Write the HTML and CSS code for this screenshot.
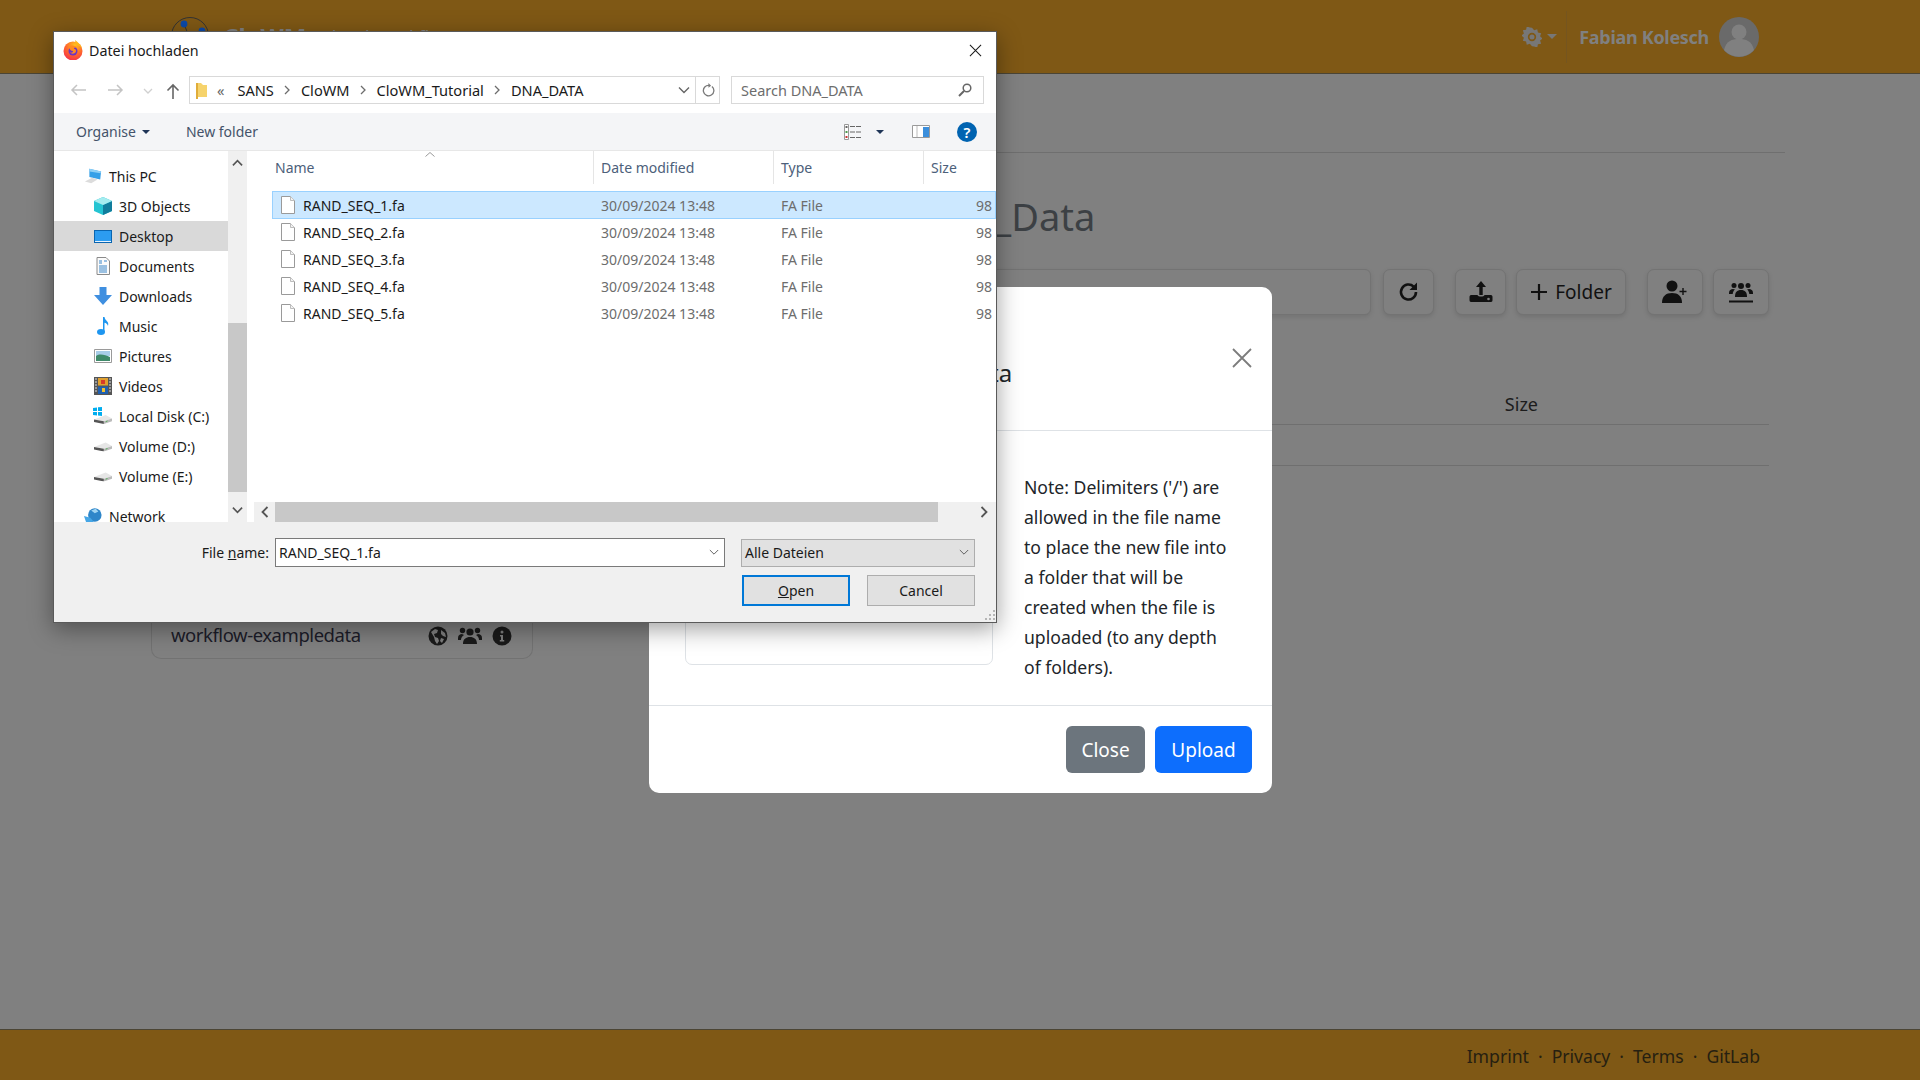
FILE: index.html
```html
<!DOCTYPE html>
<html lang="en">
<head>
  <meta charset="UTF-8" />
  <title>CloWM</title>
  <link rel="stylesheet" href="styles.css">
</head>
<body>
  <svg class="defs" aria-hidden="true">
    <symbol id="i-file" viewBox="0 0 16 20"><path d="M1.5 1.5h9l4 4v13h-13z" fill="#fff" stroke="#9a9a9a"/><path d="M10.5 1.5v4h4" fill="#f2f2f2" stroke="#bdbdbd"/></symbol>
    <symbol id="i-drive" viewBox="0 0 20 12"><path d="M0 7l13-5 7 4-9 3z" fill="#e6e6e6"/><path d="M0 7l11 2v3L0 10z" fill="#555"/><path d="M11 9l9-3v3l-9 3z" fill="#bbb"/><path d="M13 9.500l2-.7" stroke="#4caf50"/></symbol>
    <symbol id="i-chev" viewBox="0 0 10 10"><path d="M3 1l4 4-4 4" fill="none" stroke="#6d6d6d" stroke-width="1.300"/></symbol>
    <symbol id="i-down" viewBox="0 0 12 8"><path d="M1 1l5 5 5-5" fill="none" stroke="#555" stroke-width="1.100"/></symbol>
  </svg>

  <header class="topbar">
    <div class="brand">
      <svg class="logo" viewBox="0 0 38 38"><circle cx="19" cy="19" r="18.500" fill="none" stroke="#333"/><path d="M13 7l6 15 12-8M19 22l-9 10" stroke="#333" fill="none"/><circle cx="13" cy="7" r="3.400" fill="#0b49a8"/><circle cx="31" cy="14" r="3.400" fill="#0b49a8"/><circle cx="19" cy="22" r="3" fill="#8a2a1a"/></svg>
      <span class="brand-name">CloWM</span>
      <span class="brand-sub">Cloud Workflow Manager</span>
    </div>
    <div class="top-right">
      <div class="theme">
        <svg class="gear" viewBox="0 0 24 24"><path fill-rule="evenodd" fill="#777" d="M12 1l2.600 3 3.700-1.300.8 3.900 3.900.8-1.300 3.700 3 2.600-3 2.600 1.300 3.700-3.900.8-.8 3.900-3.700-1.300L12 23l-2.600-3-3.700 1.300-.8-3.900-3.900-.8 1.300-3.700-3-2.600 3-2.600-1.300-3.700 3.900-.8.8-3.900 3.700 1.300zM12 7a5 5 0 100 10 5 5 0 000-10zm0 2a3 3 0 110 6 3 3 0 010-6z"/></svg>
        <span class="caret"></span>
      </div>
      <span class="user-name">Fabian Kolesch</span>
      <svg class="avatar" viewBox="0 0 40 40"><circle cx="20" cy="20" r="20" fill="#6a6a6a"/><circle cx="20" cy="15" r="7.500" fill="#808080"/><path d="M5 33c2-9 8-11 15-11s13 2 15 11a20 20 0 01-30 0z" fill="#808080"/></svg>
    </div>
  </header>

  <main class="page">
    <div class="tabs"></div>
    <div class="columns">
      <aside class="buckets">
        <div class="bucket">
          <span class="bucket-name">workflow-exampledata</span>
          <span class="bucket-icons">
            <svg viewBox="0 0 20 20"><circle cx="10" cy="10" r="9.500" fill="#1a1a1a"/><path d="M3 6l4-3 3 1-1 3-3 1 1 3 3 1 1 3-2 3-2-3-1-4zM13 4l4 3 1 4-3-1-2-2zM13 12l3 1-2 4-2-2z" fill="#808080"/></svg>
            <svg viewBox="0 0 24 20"><circle cx="12" cy="6" r="3.600" fill="#1a1a1a"/><circle cx="4.500" cy="4.500" r="2.700" fill="#1a1a1a"/><circle cx="19.500" cy="4.500" r="2.700" fill="#1a1a1a"/><path d="M5 18c0-5 3-7 7-7s7 2 7 7zM0 12c0-3 2-4 4-4l2 1c-2 1-3 3-3 5H0zM24 12c0-3-2-4-4-4l-2 1c2 1 3 3 3 5h3z" fill="#1a1a1a"/></svg>
            <svg viewBox="0 0 20 20"><circle cx="10" cy="10" r="9.500" fill="#1a1a1a"/><circle cx="10" cy="6" r="1.500" fill="#808080"/><path d="M8 9h3v5h1.200v1.500H7.800V14H9v-3.500H8z" fill="#808080"/></svg>
          </span>
        </div>
      </aside>
      <section class="files">
        <h1 class="files-title">Bucket CloWM_Tutorial_Data</h1>
        <div class="file-tools">
          <div class="search-field"></div>
          <button class="tool tool-sq">
            <svg viewBox="0 0 24 24"><path d="M19 12a7.500 7.500 0 11-2.300-5.400" fill="none" stroke="#111" stroke-width="2.600"/><path d="M20 2.500v7.500h-7.500z" fill="#111"/></svg>
          </button>
          <button class="tool tool-sq tool-sep">
            <svg viewBox="0 0 24 24"><path d="M12 1l5 6h-3.300v8h-3.400V7H7z" fill="#111"/><path d="M2 15h6.500c.5 2 6.500 2 7 0H22c1 0 1.500 1 1.500 2v3c0 1-.5 2-1.500 2H2c-1 0-1.500-1-1.500-2v-3c0-1 .5-2 1.500-2z" fill="#111"/><circle cx="19.500" cy="19" r="1.300" fill="#808080"/></svg>
          </button>
          <button class="tool tool-folder">
            <svg viewBox="0 0 18 18"><path d="M9 1v16M1 9h16" stroke="#111" stroke-width="2.200" fill="none"/></svg>
            Folder
          </button>
          <button class="tool tool-user tool-sep">
            <svg viewBox="0 0 26 24"><circle cx="10" cy="6" r="5.500" fill="#111"/><path d="M0 23c0-7 4-10 10-10s10 3 10 10z" fill="#111"/><path d="M21 8v7M17.500 11.500h7" stroke="#111" stroke-width="1.400" fill="none"/></svg>
          </button>
          <button class="tool tool-user">
            <svg viewBox="0 0 26 24"><circle cx="13" cy="6" r="3" fill="#111"/><circle cx="6" cy="5.500" r="2.500" fill="#111"/><circle cx="20" cy="5.500" r="2.500" fill="#111"/><path d="M7 17c0-5 2-7 6-7s6 2 6 7zM1 13c0-3 2-4 4-4l2 .5c-1.500 1-2 2.500-2.300 4.500H1zM25 13c0-3-2-4-4-4l-2 .5c1.500 1 2 2.500 2.300 4.500H25z" fill="#111"/><path d="M1 21.500h24" stroke="#111" stroke-width="2" fill="none"/></svg>
          </button>
        </div>
        <div class="file-head"><span>Size</span></div>
        <div class="file-empty"></div>
      </section>
    </div>
  </main>

  <footer class="bottombar">
    <a>Imprint</a><span>·</span><a>Privacy</a><span>·</span><a>Terms</a><span>·</span><a>GitLab</a>
  </footer>

  <!-- upload modal, behind the native file dialog -->
  <div class="modal">
    <div class="modal-head">
      <h5 class="modal-title">Upload new file into DNA_Data</h5>
      <svg class="modal-x" viewBox="0 0 20 20"><path d="M1 1l18 18M19 1L1 19" stroke="#7c7c7c" stroke-width="1.800" fill="none"/></svg>
    </div>
    <div class="modal-body">
      <div class="drop-card"></div>
      <p class="note">Note: Delimiters ('/') are allowed in the file name to place the new file into a folder that will be created when the file is uploaded (to any depth of folders).</p>
    </div>
    <div class="modal-foot">
      <button class="btn btn-grey">Close</button>
      <button class="btn btn-blue">Upload</button>
    </div>
  </div>

  <!-- windows file dialog -->
  <div class="dlg">
    <div class="dlg-title">
      <svg class="fx" viewBox="0 0 20 20">
        <defs>
          <radialGradient id="fxa" cx=".6" cy=".2" r=".9"><stop offset="0" stop-color="#ffc31f"/><stop offset=".5" stop-color="#ff6a2b"/><stop offset="1" stop-color="#f3264f"/></radialGradient>
        </defs>
        <circle cx="10" cy="11" r="9.500" fill="url(#fxa)"/>
        <path d="M12 0c3 2 6 5 7 8-2-2-4-3-6-3z" fill="#ffb71b"/>
        <circle cx="10" cy="11" r="4.500" fill="#6b34c4"/>
        <path d="M6 7c2-2 6-2 8 1-2-1-3 0-3 1 2 0 3 2 1 4-2 1-4 1-5-1 1 1 3 1 3-1-2 0-4-2-4-4z" fill="#ff8a1f"/>
      </svg>
      <span class="dlg-name">Datei hochladen</span>
      <svg class="dlg-x" viewBox="0 0 14 14"><path d="M1 1l12 12M13 1L1 13" stroke="#1a1a1a" stroke-width="1.100" fill="none"/></svg>
    </div>

    <div class="dlg-addr">
      <svg class="nav-arrow" viewBox="0 0 16 14"><path d="M16 7H2M7 2L2 7l5 5" fill="none" stroke="#c4c4c4" stroke-width="1.500"/></svg>
      <svg class="nav-arrow" viewBox="0 0 16 14"><path d="M0 7h14M9 2l5 5-5 5" fill="none" stroke="#c4c4c4" stroke-width="1.500"/></svg>
      <svg class="nav-mini" viewBox="0 0 12 8"><path d="M2 2l4 4 4-4" fill="none" stroke="#d0d0d0" stroke-width="1.300"/></svg>
      <svg class="nav-up" viewBox="0 0 14 16"><path d="M7 16V2M1.500 7.500L7 2l5.500 5.500" fill="none" stroke="#666" stroke-width="1.600"/></svg>
      <div class="crumbs">
        <svg class="crumb-folder" viewBox="0 0 13 17"><path d="M1 1h5l2 2h4v12H3l-2 2z" fill="#f6d36c"/><path d="M1 1h2v16H1z" fill="#e0ad3a"/></svg>
        <span class="crumb-more">«</span>
        <span>SANS</span><svg class="chev" viewBox="0 0 10 10"><use href="#i-chev"/></svg>
        <span>CloWM</span><svg class="chev" viewBox="0 0 10 10"><use href="#i-chev"/></svg>
        <span>CloWM_Tutorial</span><svg class="chev" viewBox="0 0 10 10"><use href="#i-chev"/></svg>
        <span>DNA_DATA</span>
        <svg class="crumb-drop" viewBox="0 0 12 8"><path d="M1 1.500l5 5 5-5" fill="none" stroke="#666" stroke-width="1.400"/></svg>
        <span class="crumb-refresh">
          <svg viewBox="0 0 16 16"><path d="M12.500 4a6 6 0 11-3-1.300" fill="none" stroke="#7a7a7a" stroke-width="1.500"/><path d="M8.500 0v5.500l3-2.500z" fill="#7a7a7a"/></svg>
        </span>
      </div>
      <div class="dlg-search">
        <span>Search DNA_DATA</span>
        <svg viewBox="0 0 14 14"><circle cx="9" cy="5" r="3.800" fill="none" stroke="#666" stroke-width="1.500"/><path d="M6 8l-5 5" stroke="#666" stroke-width="2"/></svg>
      </div>
    </div>

    <div class="dlg-tools">
      <span class="tool-text">Organise</span><span class="mini-caret"></span>
      <span class="tool-text tool-new">New folder</span>
      <div class="tools-right">
        <svg class="view-ic" viewBox="0 0 18 16"><path d="M.5.500h4v15h-4z" fill="#fff" stroke="#999"/><path d="M1.500 2h2v2h-2z" fill="#666"/><path d="M1.500 7h2v2h-2z" fill="#4d9a4d"/><path d="M1.500 12h2v2h-2z" fill="#c33"/><path d="M6 2.500h12M6 8h12M6 13.500h12" stroke="#666" stroke-dasharray="5 1" fill="none"/></svg>
        <span class="mini-caret view-caret"></span>
        <svg class="pane-ic" viewBox="0 0 18 13"><path d="M.5.500h17v12H.5z" fill="#fff" stroke="#9a9a9a"/><path d="M11 2h6v10h-6z" fill="#3c8fdc"/><path d="M5 1v11" stroke="#bbb"/></svg>
        <span class="help-ic">?</span>
      </div>
    </div>

    <div class="dlg-body">
      <nav class="side">
        <ul class="side-list">
          <li class="side-top">
            <svg viewBox="0 0 20 18"><path d="M6 1l13 3-1 9-12-3z" fill="#35a0e8"/><path d="M6 1l13 3-.5 2L6 4z" fill="#8fd0f5"/><path d="M1 15l8-4 6 2-7 4z" fill="#dcdcdc"/></svg>This PC
          </li>
          <li>
            <svg viewBox="0 0 18 18"><path d="M9 0l9 4v10l-9 4-9-4V4z" fill="#24c4d2"/><path d="M9 8l9-4v10l-9 4z" fill="#117d9c"/><path d="M9 0l9 4-9 4-9-4z" fill="#a5ecef"/></svg>3D Objects
          </li>
          <li class="side-on">
            <svg viewBox="0 0 18 14"><path d="M0 1h18v13H0z" fill="#0a65b0"/><path d="M1 2h16v10H1z" fill="#2c9cf0"/><path d="M1 12h16v1H1z" fill="#e8f4ff"/></svg>Desktop
          </li>
          <li>
            <svg viewBox="0 0 18 18"><path d="M3 .5h9l3.500 3.500v13.500H3z" fill="#fbfbfb" stroke="#8a8a8a"/><path d="M5 4h3M5 6h3M10 4h3M5 9h8M5 11h8M5 13h8M5 15h8" stroke="#3b86c8"/></svg>Documents
          </li>
          <li>
            <svg viewBox="0 0 18 18"><path d="M5.500 0h7v8H18l-9 10L0 8h5.500z" fill="#3f8fe0"/></svg>Downloads
          </li>
          <li>
            <svg viewBox="0 0 18 18"><ellipse cx="7" cy="15" rx="4" ry="3" fill="#1e96f0"/><path d="M9 0h1.500c.5 4 5 4 3.500 9-.5-2-2-3-3.500-3.300V15H9z" fill="#1e96f0"/></svg>Music
          </li>
          <li>
            <svg viewBox="0 0 18 14"><path d="M.5.500h17v13H.5z" fill="#fff" stroke="#9a9a9a"/><path d="M2 2h14v5H2z" fill="#a8cde8"/><path d="M2 7c4-3 9-1 14 1v4H2z" fill="#3f8a6a"/></svg>Pictures
          </li>
          <li>
            <svg viewBox="0 0 18 18"><path d="M0 0h18v18H0z" fill="#555"/><path d="M4 1h10v7.500H4z" fill="#e0a030"/><path d="M4 9.500h10V17H4z" fill="#2060b0"/><path d="M7 3h4v4H7z" fill="#d83a2a"/><path d="M8 11h3v4H8z" fill="#f0c030"/><path d="M1 2h2M1 5h2M1 8h2M1 11h2M1 14h2M15 2h2M15 5h2M15 8h2M15 11h2M15 14h2" stroke="#ddd"/></svg>Videos
          </li>
          <li class="side-disk">
            <span class="disk-c">
              <svg class="win" viewBox="0 0 9 9"><path d="M0 1l4-.6V4H0zM5 .3L9 0v4H5zM0 5h4v3.600L0 8zM5 5h4v4l-4-.5z" fill="#00adef"/></svg>
              <svg class="drv" viewBox="0 0 20 12"><use href="#i-drive"/></svg>
            </span>Local Disk (C:)
          </li>
          <li>
            <svg viewBox="0 0 20 12"><use href="#i-drive"/></svg>Volume (D:)
          </li>
          <li>
            <svg viewBox="0 0 20 12"><use href="#i-drive"/></svg>Volume (E:)
          </li>
          <li class="side-top side-net">
            <svg viewBox="0 0 20 18"><circle cx="12" cy="8" r="7.500" fill="#2e86c9"/><path d="M8 3l5-2 3 3-4 2z" fill="#9fd4f2"/><path d="M0 9l7 2 6 7H3z" fill="#45a6e6"/></svg>Network
          </li>
        </ul>
        <div class="side-bar">
          <svg class="bar-ar" viewBox="0 0 12 8"><path d="M1 6.500l5-5 5 5" fill="none" stroke="#555" stroke-width="1.800"/></svg>
          <div class="bar-track"><div class="bar-thumb"></div></div>
          <svg class="bar-ar" viewBox="0 0 12 8"><path d="M1 1.500l5 5 5-5" fill="none" stroke="#555" stroke-width="1.800"/></svg>
        </div>
      </nav>

      <div class="list">
        <div class="list-head">
          <span class="col-name">Name<svg class="sort" viewBox="0 0 10 5"><path d="M.5 4.500L5 .5l4.500 4" fill="none" stroke="#999"/></svg></span>
          <span class="col-date">Date modified</span>
          <span class="col-type">Type</span>
          <span class="col-size">Size</span>
        </div>
        <div class="list-rows">
          <div class="row row-sel"><svg class="file-ic"><use href="#i-file"/></svg><span class="f-name">RAND_SEQ_1.fa</span><span class="f-date">30/09/2024 13:48</span><span class="f-type">FA File</span><span class="f-size">98</span></div>
          <div class="row"><svg class="file-ic"><use href="#i-file"/></svg><span class="f-name">RAND_SEQ_2.fa</span><span class="f-date">30/09/2024 13:48</span><span class="f-type">FA File</span><span class="f-size">98</span></div>
          <div class="row"><svg class="file-ic"><use href="#i-file"/></svg><span class="f-name">RAND_SEQ_3.fa</span><span class="f-date">30/09/2024 13:48</span><span class="f-type">FA File</span><span class="f-size">98</span></div>
          <div class="row"><svg class="file-ic"><use href="#i-file"/></svg><span class="f-name">RAND_SEQ_4.fa</span><span class="f-date">30/09/2024 13:48</span><span class="f-type">FA File</span><span class="f-size">98</span></div>
          <div class="row"><svg class="file-ic"><use href="#i-file"/></svg><span class="f-name">RAND_SEQ_5.fa</span><span class="f-date">30/09/2024 13:48</span><span class="f-type">FA File</span><span class="f-size">98</span></div>
        </div>
        <div class="hbar">
          <svg class="hbar-ar" viewBox="0 0 8 12"><path d="M6.500 1l-5 5 5 5" fill="none" stroke="#555" stroke-width="1.800"/></svg>
          <div class="hbar-thumb"></div>
          <svg class="hbar-ar hbar-end" viewBox="0 0 8 12"><path d="M1.500 1l5 5-5 5" fill="none" stroke="#555" stroke-width="1.800"/></svg>
        </div>
      </div>
    </div>

    <div class="dlg-foot">
      <div class="foot-row">
        <label class="foot-label">File <u>n</u>ame:</label>
        <div class="foot-input"><span>RAND_SEQ_1.fa</span><svg viewBox="0 0 12 8"><use href="#i-down"/></svg></div>
        <div class="foot-select"><span>Alle Dateien</span><svg viewBox="0 0 12 8"><use href="#i-down"/></svg></div>
      </div>
      <div class="foot-row foot-btns">
        <button class="win-btn win-default"><u>O</u>pen</button>
        <button class="win-btn">Cancel</button>
      </div>
      <svg class="grip" viewBox="0 0 12 12"><path d="M9 1h2v2H9zM5 5h2v2H5zM9 5h2v2H9zM1 9h2v2H1zM5 9h2v2H5zM9 9h2v2H9z" fill="#b5b5b5"/></svg>
    </div>
  </div>
</body>
</html>
```

FILE: styles.css
```css
*{box-sizing:border-box;}
html,body{height:100%;}
body{margin:0;background:#808080;font-family:"Noto Sans","Open Sans",sans-serif;color:#1c1c1c;overflow:hidden;display:flex;flex-direction:column;position:relative;}
ul{list-style:none;margin:0;padding:0;}
button{font-family:inherit;}
.defs{width:0;height:0;position:absolute;}

/* top bar */
.topbar{height:74px;flex:none;background:#7f5815;border-bottom:1px solid #4b4535;display:flex;align-items:center;justify-content:space-between;padding:0 161px 0 171px;}
.brand{display:flex;align-items:center;gap:14px;}
.logo{width:38px;height:38px;flex:none;margin-top:-1px;}
.brand-name{font-size:24px;font-weight:700;color:#808080;}
.brand-sub{font-size:18px;color:#808080;}
.top-right{display:flex;align-items:center;height:52px;}
.theme{display:flex;align-items:center;gap:5px;padding-right:9px;height:52px;border-right:1px solid #75551f;}
.gear{width:20px;height:20px;}
.caret{width:0;height:0;border:5px solid transparent;border-top-color:#777;border-bottom:0;}
.user-name{font-size:18px;font-weight:700;color:#808080;margin:0 10px 0 12px;letter-spacing:-.3px;}
.avatar{width:40px;height:40px;}

/* page behind the overlay */
.page{flex:1;min-height:0;padding:0 135px;}
.tabs{height:79px;border-bottom:1px solid #6f6f6f;}
.columns{display:flex;padding:0 16px;gap:40px;}
.buckets{width:382px;flex:none;}
.bucket{height:80px;margin-top:426px;border:1px solid #727272;border-top:0;border-radius:0 0 10px 10px;padding:0 20px 10px 19px;display:flex;justify-content:space-between;align-items:flex-end;}
.bucket-name{font-size:18.500px;color:#1c1c28;line-height:26px;white-space:nowrap;letter-spacing:-.45px;}
.bucket-icons{display:flex;gap:10px;align-items:center;height:20px;margin-bottom:2px;}
.bucket-icons svg{height:20px;width:20px;}
.bucket-icons svg:nth-child(2){width:24px;}
.files{flex:1;min-width:0;}
.files-title{margin:34px 0 0 10px;font-size:38px;font-weight:400;color:#3c4044;line-height:58px;white-space:nowrap;}
.file-tools{display:flex;align-items:stretch;height:46px;margin-top:24px;gap:10px;}
.search-field{flex:1;margin-right:2px;border:1px solid #737373;border-radius:6px;background:#808080;box-shadow:0 2px 5px rgba(0,0,0,.1);}
.tool{background:#808080;border:1px solid #737373;border-radius:7px;box-shadow:0 2px 5px rgba(0,0,0,.12);display:flex;align-items:center;justify-content:center;gap:7px;padding:0;color:#111;font-size:19px;}
.tool-sq{width:51px;}
.tool-sq svg{width:24px;height:24px;}
.tool-sep{margin-left:11px;}
.tool-folder{width:110px;}
.tool-folder svg{width:18px;height:18px;}
.tool-user{width:56px;}
.tool-user svg{width:26px;height:24px;}
.file-head{height:64px;margin-top:46px;border-bottom:1px solid #6f6f6f;display:flex;justify-content:flex-end;align-items:flex-end;padding:0 231px 8px 0;font-size:18px;color:#1c1c1c;}
.file-empty{height:41px;border-bottom:1px solid #6f6f6f;}

/* footer */
.bottombar{height:51px;flex:none;background:#7f5815;border-top:1px solid #4b4535;display:flex;justify-content:flex-end;align-items:center;gap:9px;padding:2px 160px 0 0;font-size:17.600px;color:#262011;}

/* upload modal */
.modal{position:absolute;left:649px;top:287px;width:623px;height:506px;background:#fff;border-radius:10px;display:flex;flex-direction:column;color:#212529;}
.modal-head{height:144px;flex:none;border-bottom:1px solid #dee2e6;display:flex;justify-content:space-between;padding:68px 20px 0;position:relative;}
.modal-title{margin:0 0 0 -3px;font-size:24px;font-weight:400;line-height:36px;white-space:nowrap;}
.modal-x{width:20px;height:20px;margin-top:-7px;}
.modal-body{flex:1;display:flex;gap:31px;padding:0 36px;min-height:0;}
.drop-card{width:308px;height:164px;margin-top:70px;border:1px solid #dee2e6;border-radius:7px;flex:none;}
.note{margin:41px 0 0;width:212px;font-size:17.600px;line-height:30px;flex:none;}
.modal-foot{height:88px;flex:none;border-top:1px solid #dee2e6;display:flex;justify-content:flex-end;gap:10px;padding:20px 20px 0;}
.btn{height:47px;border:0;border-radius:6px;color:#fff;font-size:19px;padding:0;}
.btn-grey{width:79px;background:#6c757d;}
.btn-blue{width:97px;background:#0d6efd;}

/* file dialog */
.dlg{position:absolute;left:53px;top:31px;width:944px;height:592px;background:#fff;border:1px solid #5a5a5a;box-shadow:0 6px 22px rgba(0,0,0,.38);display:flex;flex-direction:column;font-size:14px;color:#1a1a1a;}
.dlg-title{height:44px;flex:none;display:flex;align-items:center;padding:0 14px 8px 9px;}
.fx{width:20px;height:20px;margin-right:6px;}
.dlg-name{flex:1;font-size:14.300px;}
.dlg-x{width:13px;height:13px;}
.dlg-addr{height:37px;flex:none;display:flex;align-items:flex-start;padding-left:16px;}
.nav-arrow{width:16px;height:14px;margin:7px 22px 0 0;}
.nav-mini{width:12px;height:8px;margin:11px 12px 0 -4px;}
.nav-up{width:14px;height:16px;margin:7px 9px 0 0;}
.crumbs{width:531px;height:28px;border:1px solid #d9d9d9;display:flex;align-items:center;font-size:14.600px;padding-left:5px;}
.crumb-folder{width:13px;height:17px;margin-right:9px;}
.crumb-more{margin-right:13px;color:#666;}
.chev{width:10px;height:10px;margin:0 8.500px;}
.crumb-drop{width:12px;height:8px;margin-left:auto;margin-right:5px;}
.crumb-refresh{width:24px;height:26px;border-left:1px solid #d9d9d9;display:flex;align-items:center;justify-content:center;}
.crumb-refresh svg{width:14px;height:14px;}
.dlg-search{width:253px;height:28px;margin-left:11px;border:1px solid #d9d9d9;display:flex;align-items:center;justify-content:space-between;padding:0 11px 0 9px;color:#6d6d6d;font-size:14.500px;}
.dlg-search svg{width:14px;height:14px;}
.dlg-tools{height:38px;flex:none;background:#f4f5f7;border-bottom:1px solid #e7e7e7;display:flex;align-items:center;padding-left:22px;color:#44536a;font-size:14px;}
.mini-caret{width:0;height:0;border:4px solid transparent;border-top-color:#1f3557;border-bottom:0;margin-left:6px;}
.tool-new{margin-left:36px;}
.tools-right{margin-left:auto;display:flex;align-items:center;padding-right:19px;}
.view-ic{width:18px;height:16px;}
.view-caret{margin-left:14px;margin-right:28px;}
.pane-ic{width:18px;height:13px;margin-right:27px;}
.help-ic{width:20px;height:20px;border-radius:50%;background:#0063b1;color:#fff;text-align:center;font-size:15px;line-height:20px;font-weight:600;}
.dlg-body{flex:1;min-height:0;display:flex;}
.side{width:195px;flex:none;display:flex;}
.side-list{width:174px;flex:none;overflow:hidden;padding-top:10px;color:#1a1a1a;}
.side-list li{height:30px;display:flex;align-items:center;padding-left:40px;gap:7px;white-space:nowrap;}
.side-list li>svg{width:18px;height:18px;flex:none;}
.side-list .side-top{padding-left:30px;}
.side-net{margin-top:10px;}
.side-list .side-on{background:#d9d9d9;}
.disk-c{width:18px;height:18px;flex:none;position:relative;}
.win{width:9px;height:9px;position:absolute;left:-1px;top:0;}
.drv{width:18px;height:11px;position:absolute;left:0;top:6px;}
.side-bar{width:19px;flex:none;background:#f0f0f0;display:flex;flex-direction:column;align-items:center;}
.bar-ar{width:11px;height:8px;margin:8px 0;}
.bar-track{flex:1;width:100%;padding-top:148px;padding-bottom:5px;}
.bar-thumb{height:169px;background:#c8c8c8;}
.list{flex:1;min-width:0;display:flex;flex-direction:column;margin-left:1px;}
.list-head{height:33px;flex:none;display:grid;grid-template-columns:343px 180px 150px 1fr;color:#4c607a;font-size:14px;}
.list-head span{display:flex;align-items:center;padding-left:7px;border-left:1px solid #e5e5e5;position:relative;}
.list-head .col-name{padding-left:25px;border-left:0;}
.sort{width:10px;height:5px;position:absolute;left:175px;top:1px;}
.list-rows{flex:1;min-height:0;padding:7px 0 0 22px;}
.row{height:28px;margin-bottom:-1px;display:grid;grid-template-columns:30px 291px 180px 150px 1fr;align-items:center;border:1px solid transparent;color:#6d6d6d;font-size:14px;}
.row-sel{background:#cce8ff;border-color:#99d1ff;}
.file-ic{width:16px;height:20px;margin-left:7px;}
.f-name{color:#1a1a1a;}
.f-date,.f-type{padding-left:7px;}
.f-size{text-align:right;padding-right:3px;}
.hbar{height:20px;flex:none;background:#f0f0f0;display:flex;margin-left:4px;}
.hbar-ar{width:8px;height:12px;margin:4px 6px 0 7px;flex:none;}
.hbar-thumb{width:663px;background:#c8c8c8;flex:none;}
.hbar-end{margin-left:42px;}
.dlg-foot{height:100px;flex:none;background:#f0f0f0;padding:16px 21px 0 0;position:relative;}
.foot-row{display:flex;align-items:center;}
.foot-label{width:221px;text-align:right;font-size:14px;padding-right:6px;}
.foot-input{width:450px;height:29px;background:#fff;border:1px solid #7a7a7a;display:flex;align-items:center;justify-content:space-between;padding:0 5px 0 3px;}
.foot-input svg,.foot-select svg{width:10px;height:7px;}
.foot-select{width:234px;height:28px;margin-left:16px;background:#e1e1e1;border:1px solid #adadad;display:flex;align-items:center;justify-content:space-between;padding:0 5px 0 3px;}
.foot-btns{justify-content:flex-end;gap:17px;margin-top:8px;}
.win-btn{width:108px;height:31px;background:#e1e1e1;border:1px solid #adadad;font-size:14px;color:#1a1a1a;padding:0;}
.win-default{border:2px solid #0078d7;}
.grip{width:12px;height:12px;position:absolute;right:0;bottom:1px;}
```
